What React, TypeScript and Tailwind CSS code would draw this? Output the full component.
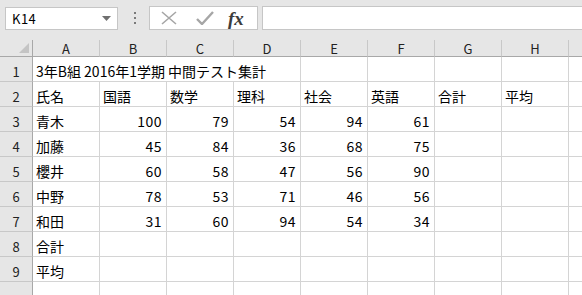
import React from "react";

const cols = ["A", "B", "C", "D", "E", "F", "G", "H"];

type Row = (string | number | null)[];

const rows: Row[] = [
  ["3年B組 2016年1学期 中間テスト集計", null, null, null, null, null, null, null],
  ["氏名", "国語", "数学", "理科", "社会", "英語", "合計", "平均"],
  ["青木", 100, 79, 54, 94, 61, null, null],
  ["加藤", 45, 84, 36, 68, 75, null, null],
  ["櫻井", 60, 58, 47, 56, 90, null, null],
  ["中野", 78, 53, 71, 46, 56, null, null],
  ["和田", 31, 60, 94, 54, 34, null, null],
  ["合計", null, null, null, null, null, null, null],
  ["平均", null, null, null, null, null, null, null],
  [null, null, null, null, null, null, null, null],
];

function Toolbar() {
  return (
    <div className="flex h-[30px] items-start bg-[#e6e6e6]">
      {/* Name box */}
      <div className="ml-[5px] mt-[7px] flex h-[23px] w-[113px] items-center justify-between border border-[#c6c6c6] bg-white pl-[6px] pr-[6px]">
        <span className="text-[13px] leading-none tracking-[0.5px] text-black">K14</span>
        <svg width="9" height="5" viewBox="0 0 9 5">
          <path d="M0 0 L9 0 L4.5 5 Z" fill="#707070" />
        </svg>
      </div>
      {/* dots */}
      <div className="ml-[16px] mt-[12px] flex flex-col gap-[3px]">
        <span className="h-[2px] w-[2px] bg-[#7a7a7a]" />
        <span className="h-[2px] w-[2px] bg-[#7a7a7a]" />
        <span className="h-[2px] w-[2px] bg-[#7a7a7a]" />
      </div>
      {/* formula buttons */}
      <div className="ml-[13px] mt-[6px] flex h-[24px] w-[109px] items-center border border-[#c6c6c6] bg-white">
        <svg className="ml-[11px]" width="16" height="14" viewBox="0 0 16 14">
          <path d="M1 1 L15 13 M15 1 L1 13" stroke="#a6a6a6" strokeWidth="1.6" fill="none" />
        </svg>
        <svg className="ml-[19px]" width="18" height="14" viewBox="0 0 18 14">
          <path d="M1 8 L6 13 L17 1" stroke="#a6a6a6" strokeWidth="2.4" fill="none" />
        </svg>
        <span
          className="ml-[14px] text-[19px] font-semibold italic leading-none text-[#3c3c3c]"
          style={{ fontFamily: '"Liberation Serif", serif' }}
        >
          fx
        </span>
      </div>
      {/* formula input */}
      <div className="ml-[4px] mt-[6px] h-[24px] flex-1 border border-r-0 border-[#c6c6c6] bg-white" />
    </div>
  );
}

function Sheet() {
  return (
    <div className="grid grid-cols-[33px_repeat(8,67px)_1fr]">
      {/* gap above column header */}
      <div className="col-span-10 h-[10px] bg-[#e6e6e6]" />
      {/* column header */}
      <div className="relative h-[17px] border-b border-r border-b-[#a8a8a8] border-r-[#a8a8a8] bg-[#e6e6e6]">
        <svg className="absolute right-[3px] bottom-[3px]" width="10" height="10" viewBox="0 0 10 10">
          <path d="M10 0 L10 10 L0 10 Z" fill="#c4c4c4" />
        </svg>
      </div>
      {cols.map((c) => (
        <div
          key={c}
          className="flex h-[17px] items-center justify-center border-b border-r border-b-[#a8a8a8] border-r-[#c8c8c8] bg-[#e6e6e6] text-[13px] leading-none text-[#222]"
        >
          {c}
        </div>
      ))}
      <div className="h-[17px] border-b border-b-[#a8a8a8] bg-[#e6e6e6]" />

      {rows.map((row, ri) => (
        <React.Fragment key={ri}>
          <div className="flex h-[25px] items-end justify-center border-b border-r border-b-[#c8c8c8] border-r-[#a8a8a8] bg-[#e6e6e6] pb-[3px] text-[13px] leading-none text-[#222]">
            {ri < 9 ? ri + 1 : ""}
          </div>
          {row.map((v, ci) => {
            const num = typeof v === "number";
            const spill = ri === 0 && ci === 0;
            return (
              <div
                key={ci}
                className={`relative flex h-[25px] items-end border-b border-[#d4d4d4] pb-[3px] text-[14px] leading-none text-black ${
                  ri === 0 && ci < 3 ? "" : "border-r"
                } ${num ? "justify-end pr-[4px] tracking-[0.5px]" : "pl-[3px]"}`}
              >
                {spill ? (
                  <span className="whitespace-nowrap">{v}</span>
                ) : (
                  v
                )}
              </div>
            );
          })}
          <div className="h-[25px] border-b border-[#d4d4d4]" />
        </React.Fragment>
      ))}
    </div>
  );
}

export default function App() {
  return (
    <div
      className="h-[295px] w-[582px] overflow-hidden bg-white"
      style={{ fontFamily: '"Noto Sans CJK JP", "Liberation Sans", sans-serif' }}
    >
      <Toolbar />
      <Sheet />
    </div>
  );
}
